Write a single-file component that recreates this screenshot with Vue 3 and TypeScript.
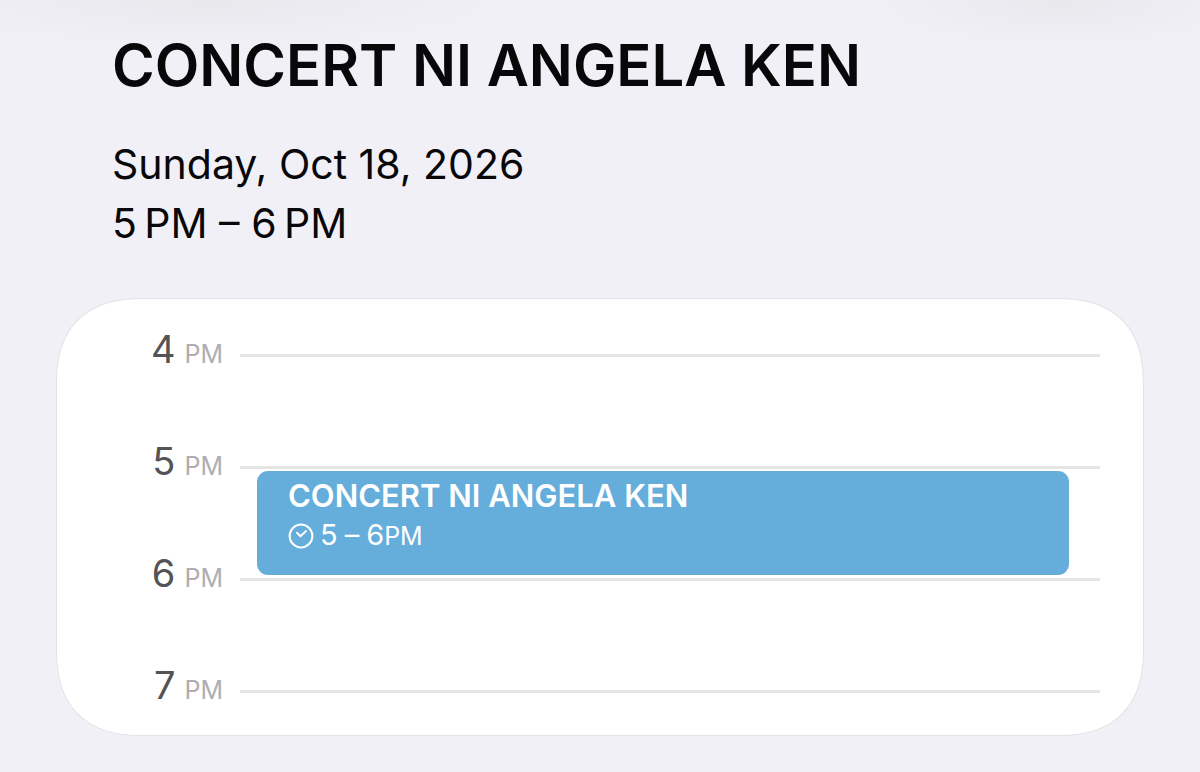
<script setup lang="ts">
interface CalendarEvent {
  title: string
  from: string
  to: string
  period: string
}

interface HourSlot {
  hour: number
  period: string
  event?: CalendarEvent
}

const title = 'CONCERT NI ANGELA KEN'

const slots: HourSlot[] = [
  { hour: 4, period: 'PM' },
  { hour: 5, period: 'PM', event: { title, from: '5', to: '6', period: 'PM' } },
  { hour: 6, period: 'PM' },
  { hour: 7, period: 'PM' },
]
</script>

<template>
  <main class="page">
    <header class="summary">
      <h1 class="title">{{ title }}</h1>
      <p class="when">Sunday, Oct 18, 2026</p>
      <p class="when">5&#8202;&#8202;PM – 6&#8202;&#8202;PM</p>
    </header>

    <section class="card" aria-label="Day timeline">
      <div v-for="slot in slots" :key="slot.hour" class="slot">
        <div class="label">
          <span class="hour">{{ slot.hour }}</span>
          <span class="period">{{ slot.period }}</span>
        </div>
        <div class="rule"></div>
        <article v-if="slot.event" class="event">
          <h2 class="event-title">{{ slot.event.title }}</h2>
          <p class="event-time">
            <svg class="clock" viewBox="0 0 26 26" aria-hidden="true">
              <circle cx="13" cy="13" r="11.4" />
              <path d="M9 9.8 L12.5 13.2 L18 8" />
            </svg>
            <span class="range">
              <span>{{ slot.event.from }}</span>
              <span class="dash">–</span>
              <span>{{ slot.event.to }}</span>
              <span class="event-period">{{ slot.event.period }}</span>
            </span>
          </p>
        </article>
      </div>
    </section>
  </main>
</template>

<style>
body {
  background: #f1f0f6;
}
</style>

<style scoped>
.page {
  box-sizing: border-box;
  min-height: 100vh;
  padding: 28px 56px 35px;
  font-family: Inter, "Liberation Sans", sans-serif;
  color: #08080a;
  background:
    radial-gradient(ellipse 320px 50px at 210px 0, #e9e8ed, transparent),
    radial-gradient(ellipse 200px 50px at calc(100% - 140px) 0, #e9e8ed, transparent),
    #f1f0f6;
}

.summary {
  padding: 0 56px;
}

.title {
  margin: 0 0 33px;
  font-size: 58px;
  line-height: 74px;
  font-weight: 600;
}

.when {
  margin: 0;
  font-size: 41px;
  line-height: 59px;
}

.card {
  box-sizing: border-box;
  margin-top: 45px;
  padding: 0 43px 0 56px;
  background: #fff;
  border: 1px solid #e3e3e7;
  border-radius: 74px;
}

@supports (corner-shape: superellipse(1.3)) {
  .card {
    border-radius: 88px;
    corner-shape: superellipse(1.3);
  }
}

.slot {
  position: relative;
  display: flex;
  align-items: flex-start;
  gap: 17px;
  height: 112px;
}

.slot:last-child {
  height: 100px;
}

.label {
  display: flex;
  align-items: baseline;
  justify-content: flex-end;
  gap: 9px;
  width: 110px;
  margin-top: 26px;
  line-height: 48px;
}

.hour {
  font-size: 38px;
  color: #545456;
}

.period {
  font-size: 25px;
  color: #aeaeb2;
}

.rule {
  flex: 1;
  height: 3px;
  margin-top: 55px;
  background: #e5e5e6;
}

.event {
  position: absolute;
  top: 60px;
  left: 144px;
  right: 31px;
  box-sizing: border-box;
  height: 104px;
  padding: 7px 31px;
  color: #fff;
  background: #65addb;
  border-radius: 11px;
}

.event-title {
  margin: 0;
  font-size: 31px;
  line-height: 36px;
  font-weight: 600;
}

.event-time {
  display: flex;
  align-items: center;
  gap: 6px;
  margin: 0;
  font-size: 29px;
  line-height: 42px;
}

.clock {
  width: 26px;
  height: 26px;
  fill: none;
  stroke: #fff;
  stroke-width: 2;
  stroke-linecap: round;
  stroke-linejoin: round;
}

.range {
  display: flex;
  align-items: baseline;
}

.dash {
  margin: 0 7px;
}

.event-period {
  font-size: 25px;
}
</style>
